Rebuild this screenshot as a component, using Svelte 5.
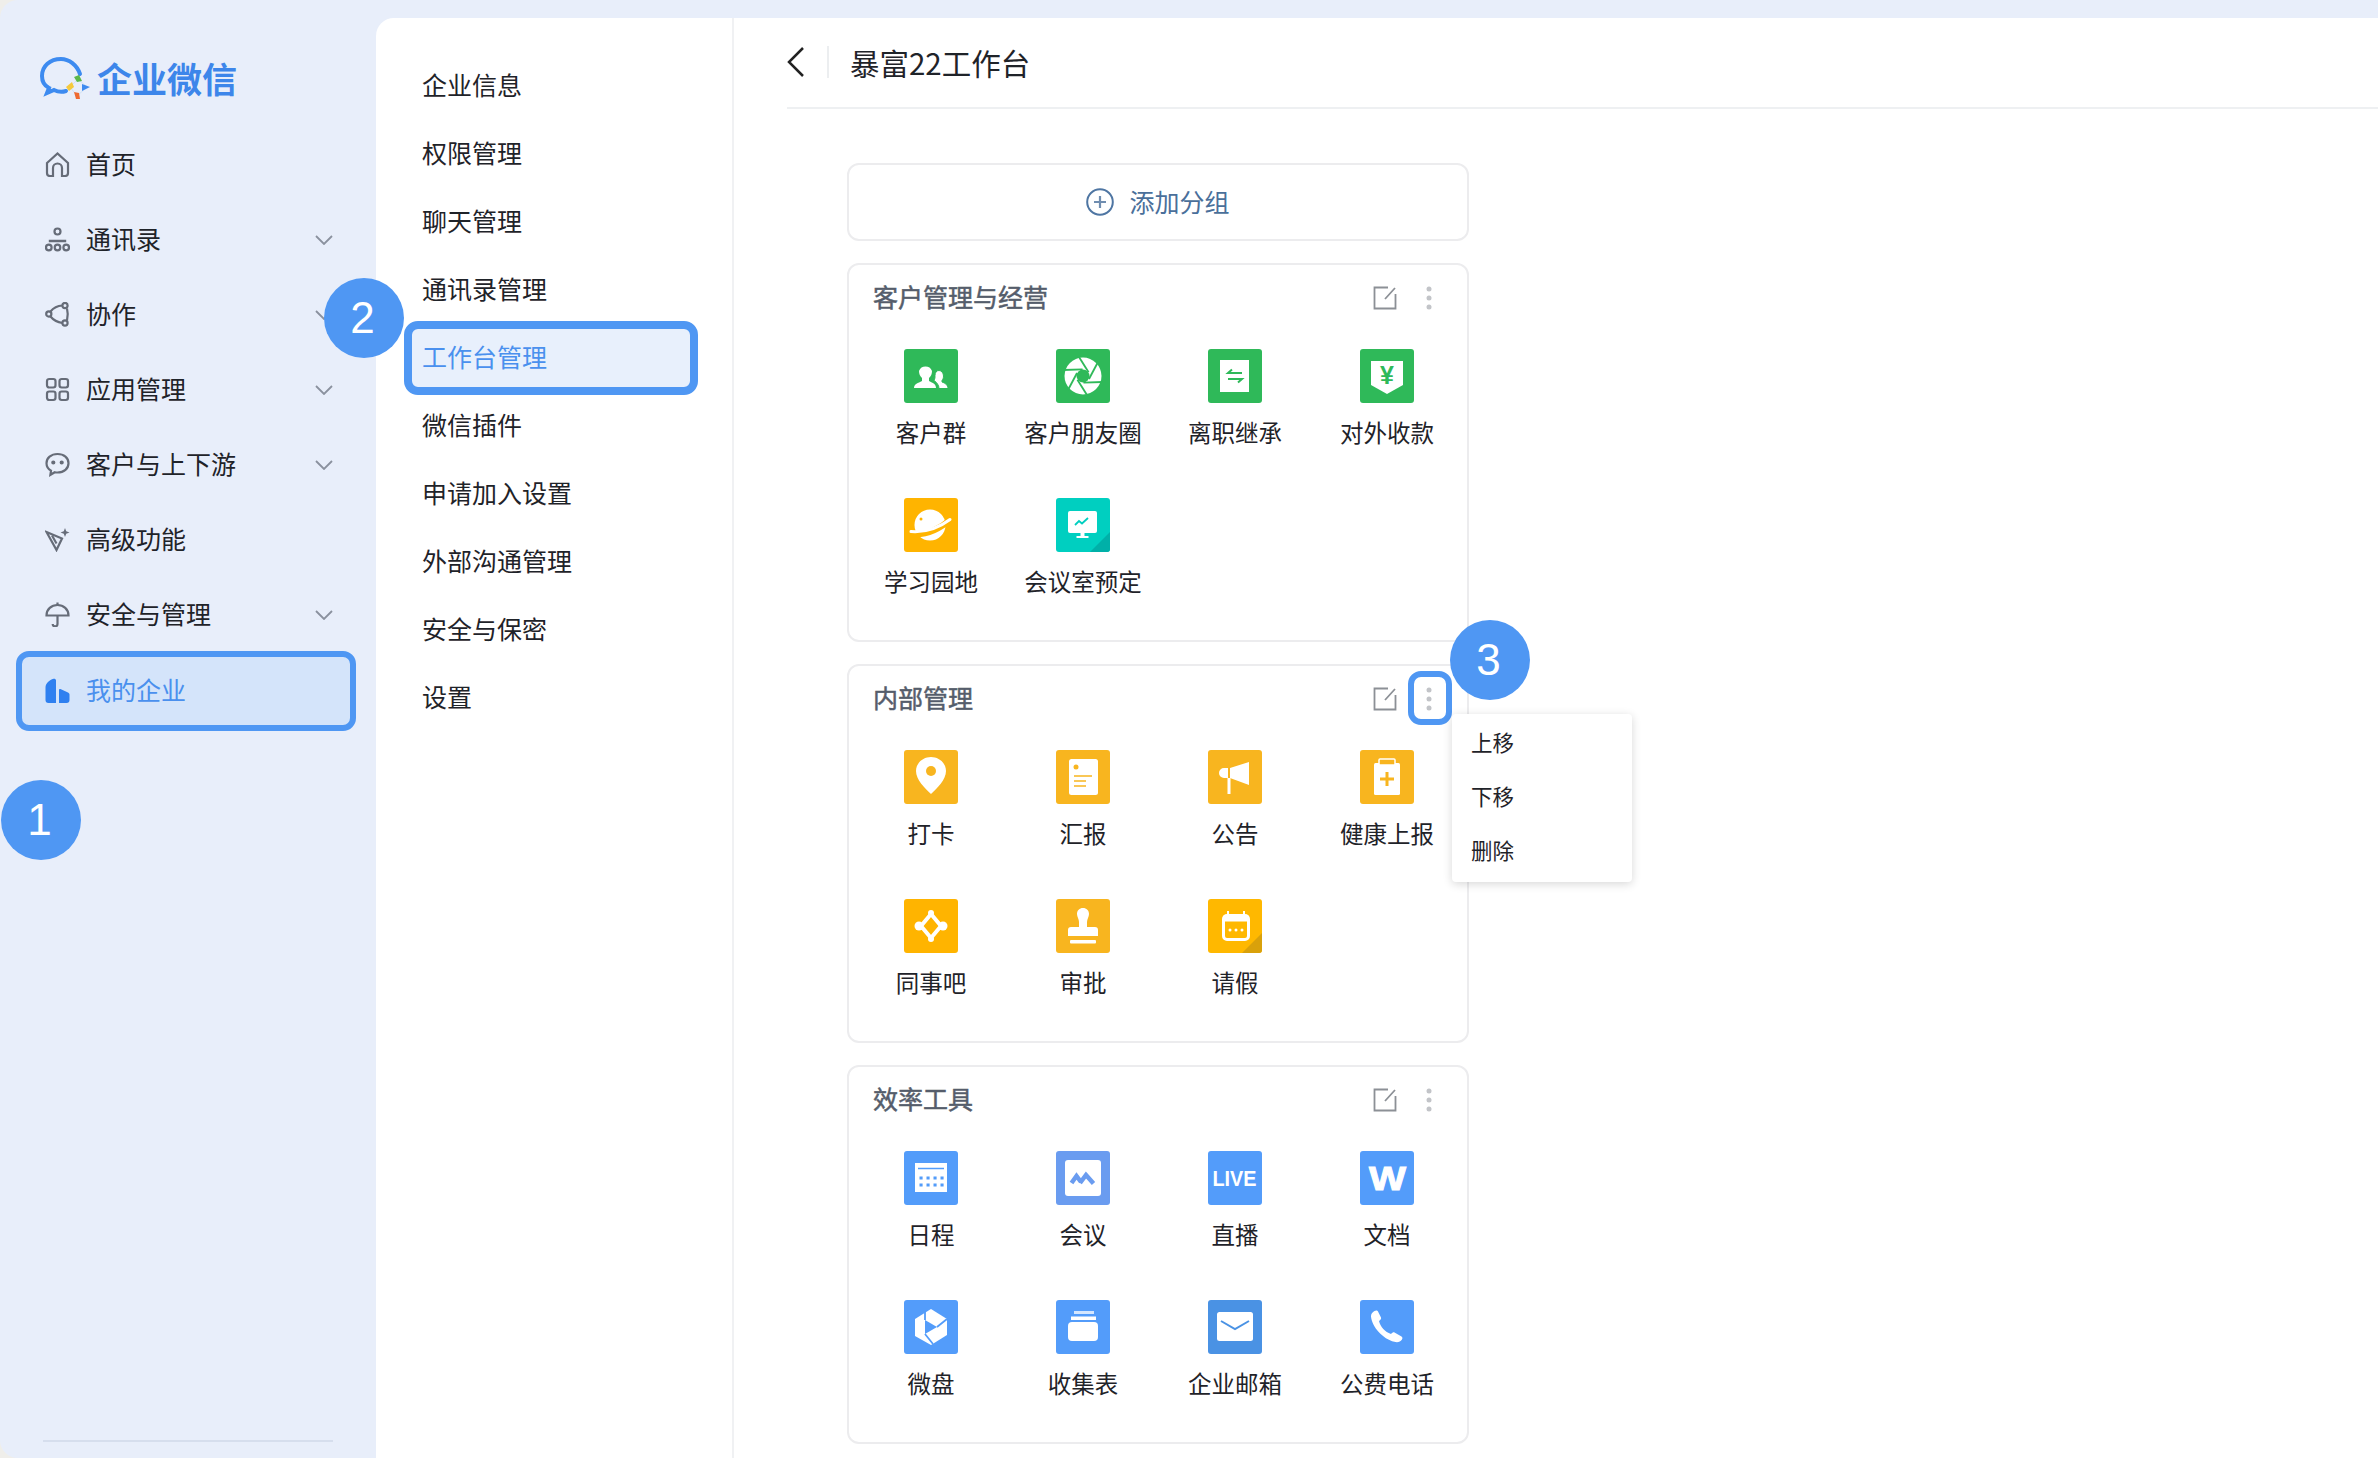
<script lang="ts">
  const G = "#2fb959";
  const O = "#f8b51f";
  const Y = "#ffb400";
  const B = "#539cfa";

  const blades = [0, 60, 120, 180, 240, 300]
    .map((a) => `<path transform="rotate(${a} 27 27)" d="M33 30 L42 13" stroke="${G}" stroke-width="1.8"/>`)
    .join("");

  const navIcons: Record<string, string> = {
    home: `<path d="M2 11 12.5 1.5 23 11v10a3 3 0 0 1-3 3h-3v-8a4.5 4.5 0 0 0-9 0v8H5a3 3 0 0 1-3-3z"/>`,
    org: `<circle cx="12.5" cy="4.5" r="3"/><circle cx="3.8" cy="20.5" r="2.8"/><circle cx="12.5" cy="20.5" r="2.8"/><circle cx="21.2" cy="20.5" r="2.8"/><path d="M3.800 14h17.400" stroke-width="2.600"/>`,
    collab: `<circle cx="3.8" cy="12" r="2.6"/><circle cx="20" cy="3.5" r="2.6"/><circle cx="20" cy="21" r="2.6"/><path d="M5.5 9.5Q10 4 17.3 3.5M5.5 14.5Q10 20 17.3 21M22 6.500Q23.500 12 22 18.500"/>`,
    apps: `<rect x="2" y="2" width="8.5" height="8.5" rx="2.2"/><rect x="14.5" y="2" width="8.5" height="8.5" rx="2.2"/><rect x="2" y="14.5" width="8.5" height="8.5" rx="2.2"/><rect x="14.5" y="14.5" width="8.5" height="8.5" rx="2.2"/>`,
    chat: `<path d="M12.5 2C6 2 1.5 6 1.5 11.2c0 3.2 1.8 5.8 4.5 7.4l-.6 4.2 4.4-2.6c.9.2 1.8.3 2.7.3 6.5 0 11-4 11-9.3S19 2 12.5 2z"/><circle cx="8.3" cy="10.5" r="1" fill="#666c78"/><circle cx="16.7" cy="10.5" r="1" fill="#666c78"/>`,
    adv: `<path d="M1.500 5 17 11.500 11.500 23z"/><path d="M7 8.500l4.500 8"/><path d="M20 1l1.200 3.300 3.300 1.200-3.300 1.200L20 10l-1.200-3.300-3.300-1.200 3.300-1.200z" fill="#666c78" stroke="none"/>`,
    umbrella: `<path d="M1.5 13.5C1.500 7 6.5 3 12.5 3s11 4 11 10.500z"/><path d="M12.5 .5V3M12.5 13.5V22a2.4 2.4 0 0 1-4.8 0"/>`,
    corp: `<path d="M.500 22V9.500C.500 5.500 4.500 2 8.500 .8c1.200-.3 2.500.4 2.500 1.500V25H3.500A3 3 0 0 1 .500 22z" fill="#2f80f0" stroke="none"/><path d="M14 12c0-.8.7-1.200 1.400-1l7.600 3.500c1 .5 1.500 1.200 1.500 2.300V22a3 3 0 0 1-3 3H14z" fill="#2f80f0" stroke="none"/>`,
  };

  const menu = [
    { name: "首页", icon: "home" },
    { name: "通讯录", icon: "org", more: true },
    { name: "协作", icon: "collab", more: true },
    { name: "应用管理", icon: "apps", more: true },
    { name: "客户与上下游", icon: "chat", more: true },
    { name: "高级功能", icon: "adv" },
    { name: "安全与管理", icon: "umbrella", more: true },
    { name: "我的企业", icon: "corp", active: true },
  ];

  const subMenu = ["企业信息", "权限管理", "聊天管理", "通讯录管理", "工作台管理", "微信插件", "申请加入设置", "外部沟通管理", "安全与保密", "设置"];

  const groups = [
    {
      title: "客户管理与经营",
      apps: [
        { name: "客户群", bg: G, art: `<path fill="#fff" d="M10 39c0-4 4-5 8-7v-3c-2-2-3-4-3-7a7 7 0 0 1 13 0c0 3-1 5-3 7v3c4 2 7 3 7 7z"/><path fill="#fff" stroke="${G}" d="M35 39.500c0-3-2-6-5-8 1-2 1-3 1-5 0-3 1.500-5 4-5s4.500 2.500 4.500 5.500c0 2-.5 3-1.500 4.500v1.500c3 1 6 3 6 6.500z"/>` },
        { name: "客户朋友圈", bg: G, art: `<circle cx="27" cy="27" r="18.500" fill="#fff"/><g fill="none">${blades}</g><circle cx="27" cy="27" r="6.500" fill="${G}"/>` },
        { name: "离职继承", bg: G, art: `<rect x="12" y="11" width="29" height="32" fill="#fff"/><path d="M34 24H20l4-3.500M20 30h14l-4 3.500" fill="none" stroke="${G}" stroke-width="2"/>` },
        { name: "对外收款", bg: G, art: `<path fill="#fff" d="M11 12h32v24l-16 9-16-9z"/><text x="27" y="35" text-anchor="middle" font-size="25" font-weight="700" font-family="'Liberation Sans',sans-serif" fill="${G}">¥</text>` },
        { name: "学习园地", bg: Y, art: `<circle cx="26" cy="27" r="15.500" fill="#fff"/><path d="M8 36Q28 38 47 21" fill="none" stroke="${Y}" stroke-width="6"/><path d="M7 33.500Q28 35 46 21.500" fill="none" stroke="#fff" stroke-width="3" stroke-linecap="round"/><circle cx="17" cy="21" r="1.500" fill="${Y}"/>` },
        { name: "会议室预定", bg: "#00cfc0", corner: "#00b0a8", art: `<rect x="12" y="13" width="29" height="22" rx="2" fill="#fff"/><path d="M24.500 35h4v3h4v2H20.500v-2h4z" fill="#fff"/><path d="M19 27l4-4 3 2.500 6-5.500" fill="none" stroke="#00cfc0" stroke-width="1.800"/>` },
      ],
    },
    {
      title: "内部管理",
      focus: true,
      apps: [
        { name: "打卡", bg: O, art: `<path fill="#fff" d="M27 7c-8 0-15 6-15 14 0 9 9 17 15 23 6-6 15-14 15-23 0-8-7-14-15-14z"/><circle cx="27" cy="21" r="5" fill="${O}"/>` },
        { name: "汇报", bg: O, art: `<rect x="13" y="9" width="29" height="36" rx="2.500" fill="#fff"/><circle cx="20" cy="17" r="2.500" fill="${O}"/><path d="M18 26h18M18 31h12M18 36h12" stroke="${O}" stroke-width="1.500"/>` },
        { name: "公告", bg: O, art: `<path fill="#fff" d="M22 18l19-6v23l-19-7zM20 18v10h-4a5 5 0 0 1 0-10z"/><rect x="19.500" y="28" width="3" height="16" fill="#fff"/>` },
        { name: "健康上报", bg: O, art: `<rect x="14" y="13" width="26" height="32" rx="1.500" fill="#fff"/><rect x="19" y="9" width="16" height="6" rx="1" fill="${O}" stroke="#fff" stroke-width="1.500"/><path d="M27 22v14M20 29h14" stroke="${O}" stroke-width="3"/>` },
        { name: "同事吧", bg: Y, art: `<path d="M27 15 37 27 27 39 17 27z" fill="none" stroke="#fff" stroke-width="4"/><circle cx="15" cy="27" r="4.500" fill="#fff"/><circle cx="39" cy="27" r="4.500" fill="#fff"/><circle cx="27" cy="14" r="3" fill="#fff"/><circle cx="27" cy="40" r="3" fill="#fff"/>` },
        { name: "审批", bg: O, art: `<path fill="#fff" d="M27 9c3.500 0 6 2.500 6 6 0 3-2 5-2 8v5h8c2 0 3 1 3 3v6H12v-6c0-2 1-3 3-3h8v-5c0-3-2-5-2-8 0-3.500 2.500-6 6-6z"/><rect x="14" y="41" width="26" height="3.500" rx="1" fill="#fff"/>` },
        { name: "请假", bg: "#ffb800", corner: "#d9a10b", art: `<rect x="15.500" y="16.500" width="25" height="24" rx="3.500" fill="none" stroke="#fff" stroke-width="3"/><rect x="15.500" y="16.500" width="25" height="6" fill="#fff"/><path d="M20 12v4M36 12v4" stroke="#fff" stroke-width="2"/><circle cx="22" cy="31" r="1.500" fill="#fff"/><circle cx="28" cy="31" r="1.500" fill="#fff"/><circle cx="34" cy="31" r="1.500" fill="#fff"/>` },
      ],
    },
    {
      title: "效率工具",
      apps: [
        { name: "日程", bg: B, art: `<rect x="11" y="12" width="32" height="29" fill="#fff"/><path d="M14 17.500h26" stroke="${B}" stroke-width="1.500"/><path d="M17 27h.1M24 27h.1M31 27h.1M38 27h.1M17 34h.1M24 34h.1M31 34h.1M38 34h.1" stroke="${B}" stroke-width="3" stroke-linecap="square"/>` },
        { name: "会议", bg: "#6a9cf0", art: `<rect x="9" y="9" width="36" height="36" rx="3" fill="#fff"/><path d="M15.500 32l5-7 4.500 6M24 32l6-8 7.500 8.500" fill="none" stroke="#6a9cf0" stroke-width="4.500"/>` },
        { name: "直播", bg: B, art: `<text x="26.500" y="35" text-anchor="middle" textLength="44" lengthAdjust="spacingAndGlyphs" font-size="22" font-weight="700" font-family="'Liberation Sans',sans-serif" fill="#fff">LIVE</text>` },
        { name: "文档", bg: B, art: `<text x="27.500" y="39" text-anchor="middle" textLength="37" lengthAdjust="spacingAndGlyphs" font-size="33" font-weight="700" font-family="'Liberation Sans',sans-serif" fill="#fff" stroke="#fff" stroke-width="1">W</text>` },
        { name: "微盘", bg: B, art: `<path fill="#fff" d="M27 9l16 10v16L27 45 11 36V19z"/><path d="M21 20l12 7-12 7z" fill="${B}"/><path d="M21 10v10M33 27l10-8M21 34l8 10" stroke="${B}" stroke-width="1.800"/>` },
        { name: "收集表", bg: B, art: `<rect x="18" y="11" width="20" height="3" fill="#fff" opacity=".75"/><rect x="15" y="16.500" width="25" height="3.500" fill="#fff"/><rect x="12" y="22" width="30" height="19" rx="4" fill="#fff"/>` },
        { name: "企业邮箱", bg: "#4a92e4", art: `<rect x="9" y="12" width="36" height="29" rx="2.500" fill="#fff"/><path d="M13 21l14 8 14-8" fill="none" stroke="#4a92e4" stroke-width="2"/>` },
        { name: "公费电话", bg: B, art: `<path fill="#fff" d="M14.500 11c1.500-1 3-.5 3.500.5l3 6c.5 1-.5 2.500-2 3.500 1.500 6 6 11 12 13 1.200-1.200 2.500-2 3.500-1.500l7 4c1.200.8 1.200 2 .3 3.300-1.500 2-4 3-7.500 2C23 39 12 27 11 16.500c-.2-2.500 1.500-4.500 3.500-5.500z"/>` },
      ],
    },
  ];
</script>

<div class="page">
  <aside class="side">
    <div class="logo">
      <svg width="54" height="46" viewBox="0 0 54 46">
        <path d="M42 19C39 10 31 4 23 4 12 4 4 11 4 21c0 6 3 10 7 12l-2 5 7-3c4 2 9 2 12 1" fill="none" stroke="#3d8bf0" stroke-width="4" stroke-linecap="round"/>
        <path d="M40 24 32 32 39 41 49 32z" fill="none" stroke="#cfe0f5" stroke-width="1"/>
        <path d="M36 22l5-2 3 6-5 1z" fill="#5cb84a"/>
        <path d="M28 32l6-5 2 5-5 4z" fill="#f5c93c"/>
        <path d="M36 37l5 1 1 6-4 0z" fill="#ee6a32"/>
        <path d="M44 29l8 3-8 4z" fill="#3d8bf0"/>
      </svg>
      <span>企业微信</span>
    </div>
    <nav class="menu">
      {#each menu as item}
        <div class="menu-item" class:active={item.active}>
          <svg class="nav-icon" width="25" height="25" viewBox="0 0 25 25">{@html navIcons[item.icon]}</svg>
          <span>{item.name}</span>
          {#if item.more}
            <svg class="chev" width="18" height="10" viewBox="0 0 18 10"><path d="M1 1l8 8 8-8" /></svg>
          {/if}
        </div>
      {/each}
    </nav>
    <div class="side-line"></div>
  </aside>

  <div class="panel">
    <nav class="sub">
      {#each subMenu as name}
        <div class="sub-item" class:active={name === "工作台管理"}>{name}</div>
      {/each}
    </nav>

    <main class="main">
      <header class="head">
        <svg width="18" height="32" viewBox="0 0 18 32"><path d="M16 2 2 16l14 14" fill="none" stroke="#222" stroke-width="2.500" /></svg>
        <i class="head-sep"></i>
        <h1>暴富22工作台</h1>
      </header>

      <div class="content">
        <div class="add">
          <svg width="28" height="28" viewBox="0 0 28 28"><circle cx="14" cy="14" r="12.800" fill="none" stroke="#4f76a3" stroke-width="2"/><path d="M14 8v12M8 14h12" stroke="#6f8db0" stroke-width="2.200"/></svg>
          <span>添加分组</span>
        </div>

        {#each groups as group}
          <section class="card">
            <div class="card-head">
              <h2>{group.title}</h2>
              <svg class="edit" width="24" height="24" viewBox="0 0 24 24"><path d="M15 1.500H1.500v21h21V8M22 2 12 13" fill="none" stroke="#8c9096" stroke-width="1.800"/></svg>
              <div class="dots" class:focus={group.focus}>
                <svg width="12" height="24" viewBox="0 0 12 24"><circle cx="6" cy="3" r="2.500"/><circle cx="6" cy="12" r="2.500"/><circle cx="6" cy="21" r="2.500"/></svg>
              </div>
            </div>
            <div class="apps">
              {#each group.apps as app}
                <div class="app">
                  <svg width="54" height="54" viewBox="0 0 54 54">
                    <rect width="54" height="54" rx="3" fill={app.bg} />
                    {#if app.corner}<path d="M54 34V51a3 3 0 0 1-3 3H34z" fill={app.corner} />{/if}
                    {@html app.art}
                  </svg>
                  <span>{app.name}</span>
                </div>
              {/each}
            </div>
            {#if group.focus}
              <div class="popover">
                <div>上移</div>
                <div>下移</div>
                <div>删除</div>
              </div>
            {/if}
          </section>
        {/each}
      </div>
    </main>
  </div>

  <b class="badge one">1</b>
  <b class="badge two">2</b>
  <b class="badge three">3</b>
</div>

<style>
  :global(body) {
    margin: 0;
    background: #efeeea;
  }

  .page {
    position: relative;
    display: flex;
    height: 1458px;
    overflow: hidden;
    border-radius: 18px 0 0 18px;
    background: #e8eefa;
    color: #1f2329;
    font-family: "Noto Sans CJK SC", "Liberation Sans", sans-serif;
    font-size: 25px;
  }

  .side {
    display: flex;
    flex-direction: column;
    flex: none;
    width: 376px;
  }

  .logo {
    display: flex;
    align-items: center;
    gap: 5px;
    height: 127px;
    padding: 28px 0 0 38px;
    box-sizing: border-box;
    color: #3d86ea;
    font-size: 35px;
    font-weight: 700;
  }

  .menu-item {
    display: flex;
    align-items: center;
    gap: 16px;
    height: 75px;
    padding: 0 43px 0 45px;
    box-sizing: border-box;
  }

  .menu-item span {
    margin-bottom: 4px;
  }

  .menu-item.active {
    height: 80px;
    margin: -1.5px 20px -2.5px 16px;
    padding-left: 23px;
    border: 6px solid #4f97f3;
    border-radius: 13px;
    background: #d4e4fa;
    color: #4a90ee;
  }

  .nav-icon {
    fill: none;
    stroke: #666c78;
    stroke-width: 2.200;
    flex: none;
  }

  .chev {
    margin-left: auto;
    fill: none;
    stroke: #8a919e;
    stroke-width: 1.800;
  }

  .side-line {
    height: 2px;
    margin: auto 43px 16px;
    background: #d6deed;
  }

  .panel {
    display: flex;
    flex: 1;
    margin-top: 18px;
    border-top-left-radius: 18px;
    background: #fff;
  }

  .sub {
    flex: none;
    width: 358px;
    padding-top: 34px;
    box-sizing: border-box;
    border-right: 2px solid #f0f1f3;
  }

  .sub-item {
    height: 68px;
    padding-left: 46px;
    line-height: 65px;
  }

  .sub-item.active {
    width: 294px;
    height: 74px;
    margin: -3px 0 -3px 28px;
    padding-left: 10px;
    box-sizing: border-box;
    border: 8px solid #4f97f3;
    border-radius: 14px;
    background: #e8f0fc;
    color: #4a90ee;
    line-height: 55px;
  }

  .main {
    flex: 1;
  }

  .head {
    display: flex;
    align-items: center;
    height: 91px;
    margin-left: 53px;
    padding-bottom: 1px;
    box-sizing: border-box;
    border-bottom: 2px solid #eef0f2;
  }

  .head-sep {
    width: 2px;
    height: 32px;
    margin: 0 21px 0 22px;
    background: #eceef0;
  }

  h1 {
    margin: 0;
    font-size: 29.500px;
    font-weight: 400;
  }

  .content {
    display: flex;
    flex-direction: column;
    gap: 22px;
    width: 622px;
    margin-left: 113px;
    padding-top: 54px;
  }

  .add {
    display: flex;
    align-items: center;
    justify-content: center;
    gap: 15px;
    height: 78px;
    box-sizing: border-box;
    border: 2px solid #ececee;
    border-radius: 12px;
    color: #4a6f9a;
  }

  .add span {
    margin-bottom: 2px;
  }

  .card {
    position: relative;
    height: 379px;
    flex: none;
    box-sizing: border-box;
    border: 2px solid #ececee;
    border-radius: 12px;
  }

  .card-head {
    display: flex;
    align-items: center;
    height: 64px;
    padding: 0 32px 0 24px;
  }

  h2 {
    flex: 1;
    margin: 0 0 2px;
    color: #555d6b;
    font-size: 25px;
    font-weight: 400;
    -webkit-text-stroke: 0.5px #555d6b;
  }

  .edit {
    margin-top: 1px;
  }

  .dots {
    position: relative;
    display: flex;
    margin: 1px 0 0 26px;
    fill: #c2c4c8;
  }

  .dots.focus::after {
    content: "";
    position: absolute;
    left: -15px;
    top: -16px;
    width: 44px;
    height: 54px;
    box-sizing: border-box;
    border: 6px solid #4f97f3;
    border-radius: 13px;
  }

  .apps {
    display: grid;
    grid-template-columns: repeat(4, 152px);
    padding-left: 6px;
  }

  .app {
    display: flex;
    flex-direction: column;
    align-items: center;
    height: 149px;
    padding-top: 20px;
    box-sizing: border-box;
    font-size: 23.500px;
  }

  .app span {
    margin-top: 12px;
    line-height: 34px;
    white-space: nowrap;
  }

  .popover {
    position: absolute;
    left: 603px;
    top: 48px;
    z-index: 2;
    width: 180px;
    height: 168px;
    padding: 1px 0 0 19px;
    box-sizing: border-box;
    border-radius: 4px;
    background: #fff;
    box-shadow: 0 2px 10px rgba(0, 0, 0, 0.16);
    font-size: 21.500px;
  }

  .popover div {
    height: 54px;
    line-height: 54px;
  }

  .badge {
    position: absolute;
    z-index: 3;
    display: flex;
    align-items: center;
    justify-content: center;
    width: 80px;
    height: 80px;
    padding-right: 3px;
    box-sizing: border-box;
    border-radius: 50%;
    background: #4f97f3;
    color: #fff;
    font-family: "Liberation Sans", sans-serif;
    font-size: 44px;
    font-weight: 400;
  }

  .one {
    left: 1px;
    top: 780px;
  }

  .two {
    left: 324px;
    top: 278px;
  }

  .three {
    left: 1450px;
    top: 620px;
  }
</style>
